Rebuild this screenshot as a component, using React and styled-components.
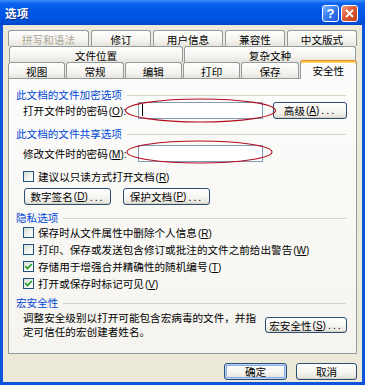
import React from "react";
import styled, { createGlobalStyle } from "styled-components";

const FONT = `"Liberation Sans", "Noto Sans CJK SC", sans-serif`;

const Global = createGlobalStyle`
  html, body { margin: 0; padding: 0; background: #ffffff; }
  body { width: 365px; height: 385px; overflow: hidden; }
  *, *::before, *::after { box-sizing: border-box; }
`;

const Window = styled.div`
  width: 365px;
  height: 385px;
  display: flex;
  flex-direction: column;
  font-family: ${FONT};
  font-size: 10.6px;
  color: #000;
`;

const TitleBar = styled.div`
  height: 25px;
  flex: none;
  display: flex;
  align-items: center;
  padding: 1px 7px 0 5px;
  background: linear-gradient(
    to bottom,
    #3d8ff9 0%,
    #0b63ee 14%,
    #0057e6 45%,
    #0053df 80%,
    #0046c8 100%
  );
`;

const Title = styled.span`
  flex: 1;
  color: #fff;
  font-weight: bold;
  font-size: 11.5px;
  text-shadow: 1px 1px 0 #0a2a8a;
  letter-spacing: 0.3px;
`;

const CapButtons = styled.div`
  display: flex;
  gap: 2px;
`;

const CapButton = styled.div`
  width: 17px;
  height: 17px;
  border: 1px solid #ffffff;
  border-radius: 3px;
  display: flex;
  align-items: center;
  justify-content: center;
  color: #fff;
  font-weight: bold;
  font-size: 13px;
  background: ${(p) =>
    p.$close
      ? "linear-gradient(135deg, #f0a188 0%, #dd5a35 45%, #c43b16 100%)"
      : "linear-gradient(135deg, #7fb2fb 0%, #3b7ef0 45%, #1f5ad8 100%)"};
`;

const Frame = styled.div`
  flex: 1;
  display: flex;
  flex-direction: column;
  border: 3px solid #0a55dc;
  border-top: none;
  box-shadow: inset 1px 0 0 #3c7ff0, inset -1px 0 0 #3c7ff0, inset 0 -1px 0 #3c7ff0;
`;

const Body = styled.div`
  flex: 1;
  background: #ece9d8;
  padding: 5px 5px 0 5px;
  display: flex;
  flex-direction: column;
`;

const TabRows = styled.div`
  display: flex;
  flex-direction: column;
  position: relative;
  z-index: 1;
`;

const TabRow = styled.div`
  display: flex;
  height: 16px;
  gap: ${(p) => p.$gap || 0}px;
  padding-left: ${(p) => p.$inset || 0}px;
`;

const Tab = styled.div`
  flex: ${(p) => (p.$w ? "none" : "1")};
  width: ${(p) => (p.$w ? `${p.$w}px` : "auto")};
  height: 16px;
  border: 1px solid #919b9c;
  border-bottom: none;
  border-radius: 3px 3px 0 0;
  background: linear-gradient(#fefefe, #f5f4f0 60%, #e7e5dc);
  display: flex;
  align-items: center;
  justify-content: center;
  padding-top: 1px;
  white-space: nowrap;
  color: ${(p) => (p.$disabled ? "#aca899" : "#000")};
`;

const ActiveTab = styled(Tab)`
  position: relative;
  z-index: 2;
  height: 19px;
  margin-top: -2px;
  background: #fcfcfc;
  border-top: 1px solid #e68b2c;
  box-shadow: inset 0 1px 0 #ffc73c, inset 0 2px 0 #ffd36b;
  padding-top: 0;
  align-items: center;
`;

const Panel = styled.div`
  height: 276px;
  flex: none;
  border: 1px solid #919b9c;
  background: linear-gradient(#fcfcfb, #f5f4ef);
  padding: 8px 10px 0 7px;
  display: flex;
  flex-direction: column;
`;

const GroupHeader = styled.div`
  display: flex;
  align-items: center;
  height: 14px;
  margin-top: ${(p) => p.$mt || 0}px;
  color: #0046d5;
  white-space: nowrap;
  &::after {
    content: "";
    flex: 1;
    height: 1px;
    margin-left: 5px;
    margin-top: 2px;
    background: #d6d3c4;
  }
`;

const FieldRow = styled.div`
  display: flex;
  align-items: center;
  height: ${(p) => p.$h || 17}px;
  margin-top: ${(p) => p.$mt || 0}px;
  padding-left: 7px;
`;

const Label = styled.span`
  width: 115px;
  flex: none;
  white-space: nowrap;
`;

const InputWrap = styled.div`
  position: relative;
  width: 125px;
  height: 17px;
  flex: none;
`;

const TextInput = styled.div`
  width: 100%;
  height: 100%;
  border: 1px solid #7f9db9;
  background: #fff;
  display: flex;
  align-items: center;
  padding-left: 3px;
`;

const Caret = styled.span`
  width: 1px;
  height: 12px;
  background: #000;
`;

const Ellipse = styled.svg`
  position: absolute;
  left: ${(p) => p.$x}px;
  top: ${(p) => p.$y}px;
  overflow: visible;
  pointer-events: none;
`;

const Button = styled.div`
  flex: none;
  width: ${(p) => p.$w}px;
  height: ${(p) => p.$h || 17}px;
  margin-left: ${(p) => p.$ml || 0}px;
  border: 1px solid #2b4f76;
  border-radius: 3px;
  background: linear-gradient(#ffffff, #f6f5f1 55%, #e4e1d6 100%);
  display: flex;
  align-items: center;
  justify-content: center;
  white-space: nowrap;
  box-shadow: ${(p) =>
    p.$default
      ? "inset 0 0 0 1px #b9d1f7, inset 0 0 0 2px #8caee9"
      : "inset 0 -1px 0 #d8d2c6"};
`;

const Dots = styled.span`
  letter-spacing: 2px;
  margin-left: 2px;
`;

const Key = styled.span`
  margin-left: 1px;
  font-size: 10px;
`;

const CheckRow = styled.div`
  display: flex;
  align-items: center;
  gap: 4px;
  height: ${(p) => p.$h || 17}px;
  margin-top: ${(p) => p.$mt || 0}px;
  padding-left: 7px;
  white-space: nowrap;
`;

const Box = styled.span`
  width: 11px;
  height: 11px;
  flex: none;
  border: 1px solid #1c5180;
  background: linear-gradient(135deg, #dcdcd6 0%, #f4f4f1 60%, #ffffff 100%);
  display: flex;
  align-items: center;
  justify-content: center;
`;

const ButtonRow = styled.div`
  display: flex;
  gap: 12px;
  height: 17px;
  margin-top: ${(p) => p.$mt || 0}px;
  padding-left: 8px;
`;

const MacroRow = styled.div`
  display: flex;
  align-items: center;
  margin-top: ${(p) => p.$mt || 0}px;
  padding-left: 7px;
`;

const MacroText = styled.p`
  margin: 0;
  width: 238px;
  line-height: 14px;
  flex: none;
`;

const Footer = styled.div`
  display: flex;
  justify-content: flex-end;
  gap: 9px;
  margin-top: 9px;
`;

const mn = (k) => (
  <Key>
    (<u>{k}</u>)
  </Key>
);

function Check({ checked }) {
  return (
    <Box>
      {checked && (
        <svg width="9" height="9" viewBox="0 0 9 9">
          <path d="M1.2 4.2 L3.5 6.5 L7.8 2.0" fill="none" stroke="#21a121" strokeWidth="1.7" />
        </svg>
      )}
    </Box>
  );
}

export default function App() {
  return (
    <>
      <Global />
      <Window>
        <TitleBar>
          <Title>选项</Title>
          <CapButtons>
            <CapButton>?</CapButton>
            <CapButton $close>
              <svg width="9" height="9" viewBox="0 0 9 9">
                <path d="M1 1 L8 8 M8 1 L1 8" stroke="#fff" strokeWidth="1.8" />
              </svg>
            </CapButton>
          </CapButtons>
        </TitleBar>
        <Frame>
          <Body>
            <TabRows>
              <TabRow $gap={2}>
                <Tab $w={81} $disabled>拼写和语法</Tab>
                <Tab $w={60}>修订</Tab>
                <Tab $w={70}>用户信息</Tab>
                <Tab $w={60}>兼容性</Tab>
                <Tab $w={70}>中文版式</Tab>
              </TabRow>
              <TabRow $gap={1} $inset={1}>
                <Tab $w={174}>文件位置</Tab>
                <Tab $w={172}>复杂文种</Tab>
              </TabRow>
              <TabRow $gap={1}>
                <Tab>视图</Tab>
                <Tab>常规</Tab>
                <Tab>编辑</Tab>
                <Tab>打印</Tab>
                <Tab>保存</Tab>
                <ActiveTab>安全性</ActiveTab>
              </TabRow>
            </TabRows>
            <Panel>
              <GroupHeader>此文档的文件加密选项</GroupHeader>
              <FieldRow $h={18}>
                <Label>
                  打开文件时的密码{mn("O")}:
                </Label>
                <InputWrap>
                  <TextInput>
                    <Caret />
                  </TextInput>
                  <Ellipse $x={-13} $y={-3} width="151" height="23">
                    <ellipse cx="75.5" cy="11.5" rx="75" ry="11.5" fill="none" stroke="#b30d1b" strokeWidth="1.1" />
                  </Ellipse>
                </InputWrap>
                <Button $w={74} $ml={10}>
                  高级{mn("A")}
                  <Dots>...</Dots>
                </Button>
              </FieldRow>

              <GroupHeader $mt={7}>此文档的文件共享选项</GroupHeader>
              <FieldRow $mt={5}>
                <Label>
                  修改文件时的密码{mn("M")}:
                </Label>
                <InputWrap>
                  <TextInput />
                  <Ellipse $x={-11} $y={-4} width="145" height="22">
                    <ellipse cx="72.5" cy="11" rx="72.5" ry="11" fill="none" stroke="#b30d1b" strokeWidth="1.1" />
                  </Ellipse>
                </InputWrap>
              </FieldRow>

              <CheckRow $h={14} $mt={7}>
                <Check />
                <span>建议以只读方式打开文档{mn("R")}</span>
              </CheckRow>

              <ButtonRow $mt={5}>
                <Button $w={87}>
                  数字签名{mn("D")}
                  <Dots>...</Dots>
                </Button>
                <Button $w={87}>
                  保护文档{mn("P")}
                  <Dots>...</Dots>
                </Button>
              </ButtonRow>

              <GroupHeader $mt={5}>隐私选项</GroupHeader>
              <CheckRow>
                <Check />
                <span>保存时从文件属性中删除个人信息{mn("R")}</span>
              </CheckRow>
              <CheckRow>
                <Check />
                <span>打印、保存或发送包含修订或批注的文件之前给出警告{mn("W")}</span>
              </CheckRow>
              <CheckRow>
                <Check checked />
                <span>存储用于增强合并精确性的随机编号{mn("T")}</span>
              </CheckRow>
              <CheckRow>
                <Check checked />
                <span>打开或保存时标记可见{mn("V")}</span>
              </CheckRow>

              <GroupHeader $mt={3}>宏安全性</GroupHeader>
              <MacroRow $mt={2}>
                <MacroText>调整安全级别以打开可能包含宏病毒的文件，并指定可信任的宏创建者姓名。</MacroText>
                <Button $w={82} $h={16} $ml={4}>
                  宏安全性{mn("S")}
                  <Dots>...</Dots>
                </Button>
              </MacroRow>
            </Panel>
            <Footer>
              <Button $w={63} $default>
                确定
              </Button>
              <Button $w={61}>取消</Button>
            </Footer>
          </Body>
        </Frame>
      </Window>
    </>
  );
}
